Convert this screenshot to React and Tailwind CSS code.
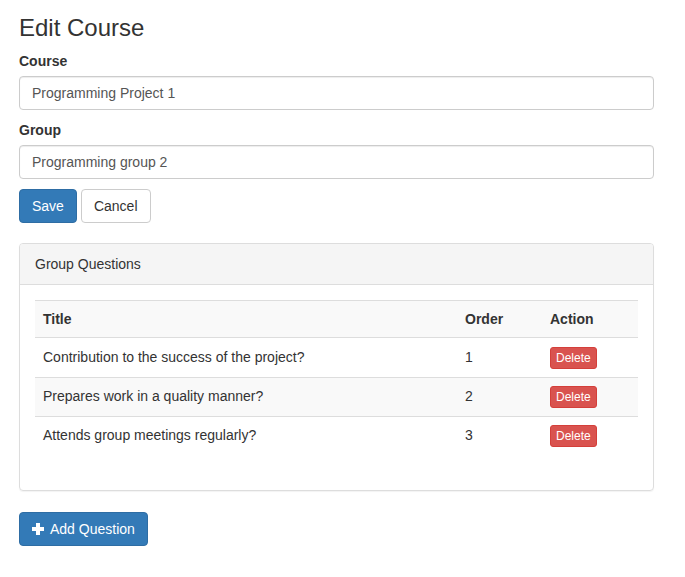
import { useState } from "react";

const questions = [
  { id: 1, title: "Contribution to the success of the project?", order: 1 },
  { id: 2, title: "Prepares work in a quality manner?", order: 2 },
  { id: 3, title: "Attends group meetings regularly?", order: 3 },
];

function PlusIcon() {
  return (
    <svg width="12" height="12" viewBox="0 0 12 12" className="shrink-0">
      <path d="M4 0h4v4h4v4H8v4H4V8H0V4h4z" fill="#fff" />
    </svg>
  );
}

export default function App() {
  const [course, setCourse] = useState("Programming Project 1");
  const [group, setGroup] = useState("Programming group 2");

  return (
    <div
      className="min-h-screen bg-white px-[19px] pt-[15px] text-[14px] leading-[20px] text-[#333]"
      style={{ fontFamily: '"Liberation Sans", Arial, sans-serif' }}
    >
      <div className="w-[635px]">
        <h3 className="mb-[10px] text-[24px] leading-[26.4px] font-medium">Edit Course</h3>

        <div className="mb-[10px]">
          <label className="mb-[5px] inline-block font-bold">Course</label>
          <input
            value={course}
            onChange={(e) => setCourse(e.target.value)}
            className="block h-[34px] w-full rounded-[4px] border border-[#ccc] px-[12px] py-[6px] text-[14px] text-[#555] shadow-[inset_0_1px_1px_rgba(0,0,0,0.075)] outline-none"
          />
        </div>

        <div className="mb-[10px]">
          <label className="mb-[5px] inline-block font-bold">Group</label>
          <input
            value={group}
            onChange={(e) => setGroup(e.target.value)}
            className="block h-[34px] w-full rounded-[4px] border border-[#ccc] px-[12px] py-[6px] text-[14px] text-[#555] shadow-[inset_0_1px_1px_rgba(0,0,0,0.075)] outline-none"
          />
        </div>

        <div className="flex gap-1">
          <button className="h-[34px] rounded-[4px] border border-[#2e6da4] bg-[#337ab7] px-[12px] text-white">
            Save
          </button>
          <button className="h-[34px] rounded-[4px] border border-[#ccc] bg-white px-[12px] text-[#333]">
            Cancel
          </button>
        </div>

        <div className="mt-[20px] mb-[21px] rounded-[4px] border border-[#ddd] shadow-[0_1px_1px_rgba(0,0,0,0.05)]">
          <div className="rounded-t-[3px] border-b border-[#ddd] bg-[#f5f5f5] px-[15px] py-[10px]">
            Group Questions
          </div>
          <div className="p-[15px]">
            <table className="mb-[20px] w-full">
              <tbody>
                <tr className="bg-[#f9f9f9]">
                  <th className="w-[422px] border-t border-[#ddd] p-[8px] text-left align-top font-bold">Title</th>
                  <th className="w-[85px] border-t border-[#ddd] p-[8px] text-left align-top font-bold">Order</th>
                  <th className="w-[96px] border-t border-[#ddd] p-[8px] text-left align-top font-bold">Action</th>
                </tr>
                {questions.map((q, i) => {
                  const cell =
                    i === 0
                      ? "border-t border-[#ddd] px-[8px] pt-[9px] pb-[8px] align-top"
                      : "border-t border-[#ddd] p-[8px] align-top";
                  return (
                    <tr key={q.id} className={i % 2 === 1 ? "bg-[#f9f9f9]" : "bg-white"}>
                      <td className={cell}>{q.title}</td>
                      <td className={cell}>{q.order}</td>
                      <td className={cell}>
                        <button className="h-[22px] rounded-[3px] border border-[#d43f3a] bg-[#d9534f] px-[5px] text-[12px] leading-[18px] text-white">
                          Delete
                        </button>
                      </td>
                    </tr>
                  );
                })}
              </tbody>
            </table>
          </div>
        </div>

        <button className="flex h-[34px] items-center gap-[6px] rounded-[4px] border border-[#2e6da4] bg-[#337ab7] px-[12px] text-white">
          <PlusIcon />
          <span>Add Question</span>
        </button>
      </div>
    </div>
  );
}
